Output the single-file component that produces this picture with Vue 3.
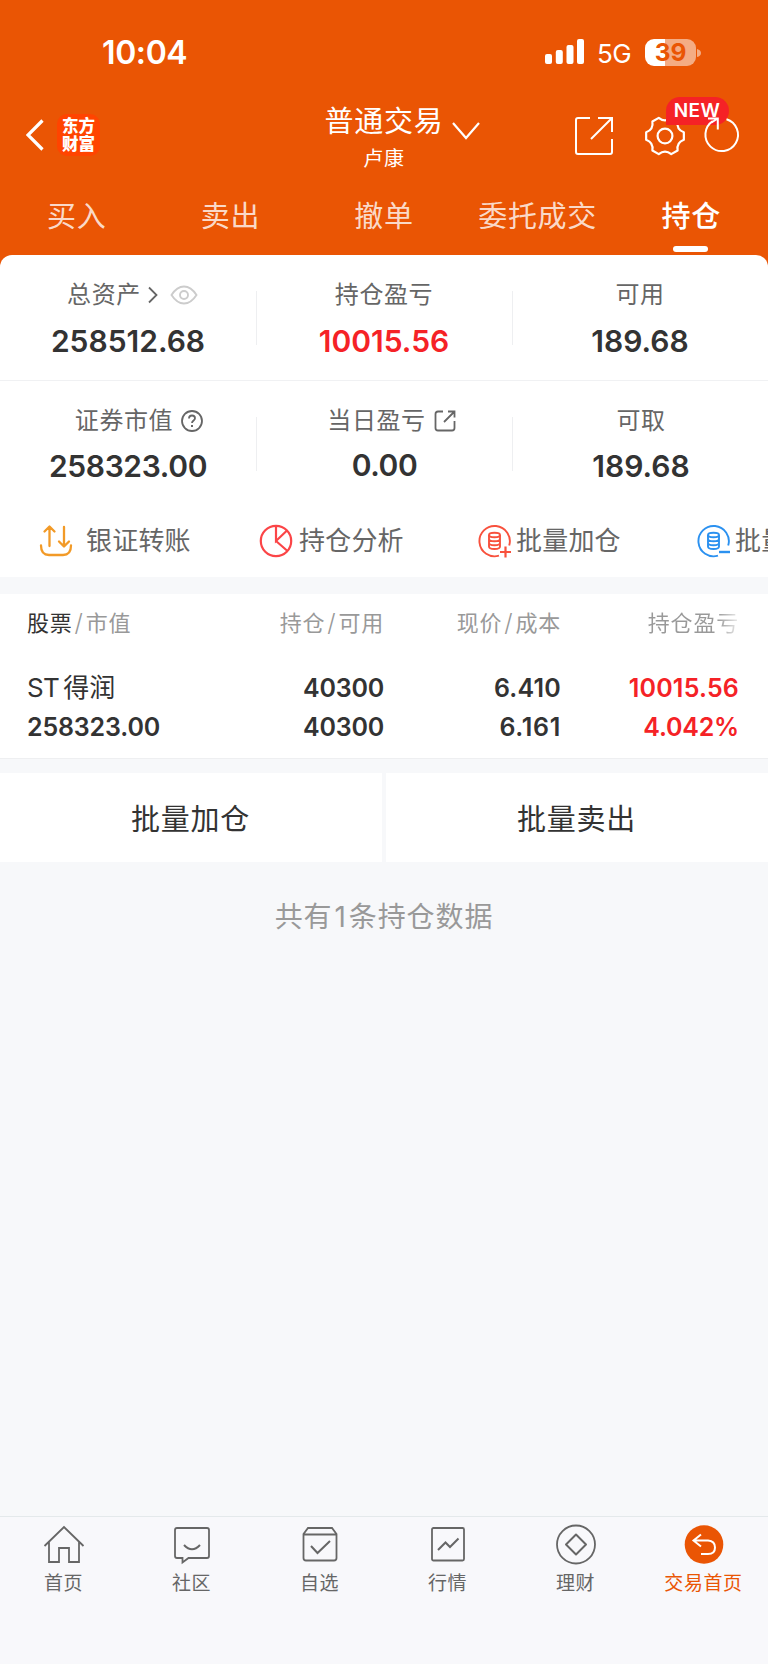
<script setup>
const tabs = ['买入', '卖出', '撤单', '委托成交', '持仓']
const nav = [
  { id: 'home', label: '首页' },
  { id: 'club', label: '社区' },
  { id: 'fav', label: '自选' },
  { id: 'quote', label: '行情' },
  { id: 'wealth', label: '理财' },
  { id: 'trade', label: '交易首页' },
]
</script>

<template>
  <div class="page">
    <div class="top">
      <div class="status">
        <span class="time">10:04</span>
        <div class="status-right">
          <svg class="signal" width="39" height="25" viewBox="0 0 39 25" fill="#fff">
            <rect x="0" y="15" width="7" height="10" rx="2" />
            <rect x="10.8" y="11" width="7" height="14" rx="2" />
            <rect x="21.5" y="6" width="7" height="19" rx="2" />
            <rect x="32" y="0" width="7" height="25" rx="2" />
          </svg>
          <span class="net">5G</span>
          <div class="battery"><span>39</span></div>
          <svg width="4" height="10" viewBox="0 0 4 10"><path d="M0 1Q4 2 4 5T0 9Z" fill="#f4ac84" /></svg>
        </div>
      </div>

      <div class="bar">
        <div class="bar-left">
          <svg width="18" height="32" viewBox="0 0 18 32" fill="none" stroke="#fff" stroke-width="3.2"><path d="M16.5 1.5L2 16L16.5 30.5" /></svg>
          <div class="logo"><span>东方</span><span>财富</span></div>
        </div>
        <div class="title">
          <div class="title-main">普通交易</div>
          <div class="title-sub">卢康</div>
          <svg class="caret" width="28" height="20" viewBox="0 0 28 20" fill="none" stroke="#fff" stroke-width="2.2"><path d="M1 2L14 17L27 2" /></svg>
        </div>
        <div class="bar-right">
          <svg width="40" height="40" viewBox="0 0 40 40" fill="none" stroke="#fff" stroke-width="2"><path d="M16 2H4Q2 2 2 4V36Q2 38 4 38H36Q38 38 38 36V23M24 2H38V16M38 2L17 23" /></svg>
          <div class="gear">
            <svg width="42" height="42" viewBox="0 0 42 42" fill="none" stroke="#fff" stroke-width="2.200" stroke-linejoin="round"><circle cx="21" cy="21" r="7.400" /><path d="M39.850 17.300V24.700Q32.300 27.500 33.600 35.500L27.250 39.150Q21 34 14.750 39.150L8.400 35.500Q9.700 27.500 2.150 24.700V17.300Q9.700 14.500 8.400 6.500L14.750 2.850Q21 8 27.250 2.850L33.600 6.500Q32.300 14.500 39.850 17.300Z" /></svg>
            <span class="badge">NEW</span>
          </div>
          <svg class="refresh" width="40" height="42" viewBox="0 0 40 42" fill="none" stroke="#fff" stroke-width="2"><path d="M24.500 5.200A16.300 16.300 0 1 1 10.700 7.200" /><path d="M6 4.500H15.800V15.500M15.800 4.500L9.500 8.500" /></svg>
        </div>
      </div>

      <div class="tabs">
        <div v-for="(t, i) in tabs" :key="t" class="tab" :class="{ on: i === 4 }">{{ t }}</div>
      </div>

      <div class="card">
        <div class="row">
          <div class="cell">
            <div class="label l1">总资产
              <svg class="chev" width="10" height="18" viewBox="0 0 10 18" fill="none" stroke="#666" stroke-width="1.800"><path d="M1 1.500L8.500 9L1 16.500" /></svg>
              <svg class="eye" width="28" height="20" viewBox="0 0 28 20" fill="none" stroke="#ccc" stroke-width="1.900"><path d="M1.500 10Q7 1.500 14 1.500T26.500 10Q21 18.500 14 18.500T1.500 10Z" /><circle cx="14" cy="10" r="4" /></svg>
            </div>
            <div class="val">258512.68</div>
          </div>
          <div class="cell"><div class="label">持仓盈亏</div><div class="val red">10015.56</div></div>
          <div class="cell"><div class="label">可用</div><div class="val">189.68</div></div>
        </div>
        <div class="row second">
          <div class="cell">
            <div class="label l2">证券市值
              <svg class="ico" width="22" height="22" viewBox="0 0 22 22" fill="none" stroke="#666" stroke-width="1.800"><circle cx="11" cy="11" r="10" /><path d="M8 8.500Q8 5.500 11 5.500T14 8.300C14 10.500 11 10.500 11 13" /><path d="M11 15V17" stroke-width="2" /></svg>
            </div>
            <div class="val tight">258323.00</div>
          </div>
          <div class="cell">
            <div class="label l3">当日盈亏
              <svg class="ico" width="22" height="22" viewBox="0 0 22 22" fill="none" stroke="#666" stroke-width="1.800"><path d="M9 1.500H4Q1.500 1.500 1.500 4V18Q1.500 20.500 4 20.500H18Q20.500 20.500 20.500 18V11M14 1.500H20.500V7.500M20.500 1.500L10 12" /></svg>
            </div>
            <div class="val up">0.00</div>
          </div>
          <div class="cell shift"><div class="label">可取</div><div class="val">189.68</div></div>
        </div>
        <div class="actions">
          <div class="action first">
            <svg width="34" height="34" viewBox="0 0 34 34" fill="none" stroke="#f29a27" stroke-width="2.300" stroke-linecap="round" stroke-linejoin="round"><path d="M2 21.500Q2 31 10 31H24Q32 31 32 21.500M10.500 22V3M5.500 7.500L10.500 2.500L15.500 7.500M25 3V22M20 17.500L25 22.500L30 17.500" /></svg>
            <span>银证转账</span>
          </div>
          <div class="action">
            <svg width="34" height="34" viewBox="0 0 34 34" fill="none" stroke="#fb4547" stroke-width="2.200"><circle cx="17" cy="17" r="15.200" /><path d="M17 1.800V17L28 6.500M17 17L28.500 27" /></svg>
            <span>持仓分析</span>
          </div>
          <div class="action third">
            <svg width="34" height="34" viewBox="0 0 34 34" fill="none" stroke="#f8513d" stroke-width="1.900"><path d="M31.200 21.500A15.200 15.200 0 1 0 21 31.700" /><ellipse cx="16.500" cy="11" rx="5.500" ry="2.300" /><path d="M11 11V22.500Q11 25 16.500 25T22 22.500V11M11 15Q11 17.300 16.500 17.300T22 15M11 19Q11 21.200 16.500 21.200T22 19" /><path d="M27.500 22.500V33.500M22 28H33" stroke-width="2.200" /></svg>
            <span>批量加仓</span>
          </div>
          <div class="action third">
            <svg width="34" height="34" viewBox="0 0 34 34" fill="none" stroke="#2b91f0" stroke-width="1.900"><path d="M31.200 21.500A15.200 15.200 0 1 0 21 31.700" /><ellipse cx="16.500" cy="11" rx="5.500" ry="2.300" /><path d="M11 11V22.500Q11 25 16.500 25T22 22.500V11M11 15Q11 17.300 16.500 17.300T22 15M11 19Q11 21.200 16.500 21.200T22 19" /><path d="M22 28H33" stroke-width="2.400" /></svg>
            <span>批量</span>
          </div>
        </div>
      </div>
    </div>

    <div class="table">
      <div class="thead">
        <div><b>股票</b><i>/</i>市值</div>
        <div>持仓<i>/</i>可用</div>
        <div>现价<i>/</i>成本</div>
        <div class="fade">持仓盈亏</div>
      </div>
      <div class="trow"><div class="name"><span class="st">ST</span>得润</div><div class="qty">40300</div><div class="loose">6.410</div><div class="red loose">10015.56</div></div>
      <div class="trow last"><div class="value">258323.00</div><div class="qty">40300</div><div class="cost">6.161</div><div class="red pct">4.042%</div></div>
    </div>

    <div class="batch">
      <div>批量加仓</div>
      <div>批量卖出</div>
    </div>
    <div class="count">共有<span>1</span>条持仓数据</div>

    <div class="nav">
      <div v-for="n in nav" :key="n.id" class="nav-item" :class="{ active: n.id === 'trade' }">
        <svg width="42" height="42" viewBox="0 0 42 42" fill="none" stroke="#666" stroke-width="1.800">
          <path v-if="n.id === 'home'" d="M1.500 22L21 3L40.500 22M6 18V38H16V24H26V38H36V18" />
          <template v-else-if="n.id === 'club'">
            <path d="M6 4H36Q38 4 38 6V32Q38 34 36 34H17.500L11.500 38.500V34H6Q4 34 4 32V6Q4 4 6 4Z" />
            <path d="M13 21Q21 29.500 29 21" stroke-width="2" />
          </template>
          <template v-else-if="n.id === 'fav'">
            <path d="M4.500 10L9 4H33L37.500 10V34Q37.500 36.500 35 36.500H7Q4.500 36.500 4.500 34ZM4.500 10.500H37.500" />
            <path d="M12 22L18.500 29L31 17" stroke-width="2" />
          </template>
          <template v-else-if="n.id === 'quote'">
            <rect x="5" y="4" width="32" height="32.500" rx="1.500" />
            <path d="M11 26L18.500 18.500L23 23L31.500 14.500" stroke-width="2" />
          </template>
          <template v-else-if="n.id === 'wealth'">
            <circle cx="21" cy="20.500" r="19" />
            <path d="M21 10.500L31 20.500L21 30.500L11 20.500Z" stroke-width="2" stroke-linejoin="round" />
          </template>
          <template v-else>
            <circle cx="21" cy="20.500" r="19.300" fill="#ea5504" stroke="none" />
            <path d="M18 10.500L10.500 16.500L18 22.500M10.500 16.500H25Q32 17 32 23.500T25 30H18" stroke="#fff" stroke-width="2" />
          </template>
        </svg>
        <span>{{ n.label }}</span>
      </div>
    </div>
  </div>
</template>

<style>
body { background: #fff; }
</style>

<style scoped>
.page { width: 768px; height: 1664px; display: flex; flex-direction: column; overflow: hidden; background: #f7f8fa; font-family: Inter, "Noto Sans CJK SC", sans-serif; color: #333; }
.page svg { display: block; flex: none; }
.top { background: #ea5504; }
.status { height: 100px; box-sizing: border-box; padding: 5px 67px 0 102px; display: flex; justify-content: space-between; align-items: center; color: #fff; }
.time { font-size: 32px; font-weight: 600; letter-spacing: -0.4px; }
.status-right { display: flex; align-items: center; }
.signal { margin-top: -2px; position: relative; left: 1px; }
.net { font-size: 26px; margin-left: 14px; width: 34px; letter-spacing: -0.5px; line-height: 30px; padding-top: 2px; }
.battery { margin: -1px 1px 0 14px; width: 51px; height: 27px; border-radius: 9px; background: linear-gradient(90deg, #fff 20px, #f4ac84 20px); display: flex; align-items: center; justify-content: center; color: #ea5504; font-weight: 700; font-size: 24.5px; line-height: 27px; }
.bar { height: 76px; display: grid; grid-template-columns: 250px 268px 250px; }
.bar-left { display: flex; align-items: center; padding-left: 26px; gap: 13px; height: 70px; }
.logo { width: 43px; height: 42px; border-radius: 10px; background: #ff4400; color: #fff; font-weight: 900; font-size: 16.500px; line-height: 18px; display: flex; flex-direction: column; align-items: center; justify-content: center; }
.title { position: relative; text-align: center; color: #fff; padding-top: 1px; }
.title-main { font-size: 29px; line-height: 42px; letter-spacing: 0.7px; }
.title-sub { font-size: 20px; line-height: 32px; letter-spacing: 0.7px; }
.caret { position: absolute; left: 202px; top: 21px; }
.bar-right { display: flex; align-items: center; height: 71px; padding-left: 56px; }
.gear { position: relative; margin-left: 30px; }
.badge { position: absolute; left: 22px; top: -18px; width: 63px; height: 28px; border-radius: 14px 14px 14px 0; background: #f52226; color: #fff; font-size: 19px; font-weight: 600; line-height: 28px; text-align: center; letter-spacing: 0.4px; text-indent: -1px; }
.refresh { position: relative; margin-left: 16px; top: -1px; }
.tabs { height: 79px; display: grid; grid-template-columns: repeat(5, 1fr); }
.tab { position: relative; text-align: center; font-size: 29px; line-height: 81px; height: 79px; letter-spacing: 0.7px; color: rgba(255, 255, 255, .8); }
.tab.on { color: #fff; font-weight: 500; }
.tab.on::after { content: ""; position: absolute; left: 59px; bottom: 3.500px; width: 35px; height: 5.500px; border-radius: 3px; background: #fff; }
.card { background: #fff; border-radius: 12px 12px 0 0; height: 322px; overflow: hidden; }
.row { height: 125px; display: grid; grid-template-columns: repeat(3, 1fr); border-bottom: 1px solid #f0f1f3; }
.second { border: 0; height: 124px; }
.cell { position: relative; text-align: center; padding-top: 22px; }
.cell + .cell::before { content: ""; position: absolute; left: 0; top: 36px; width: 1px; height: 54px; background: #eeeff1; }
.label { font-size: 24px; line-height: 36px; height: 36px; letter-spacing: 0.6px; color: #666; display: flex; align-items: center; justify-content: center; }
.chev { margin-left: 7px; }
.eye { margin-left: 12px; }
.l1 { padding-left: 9px; }
.l2 { padding-left: 22px; }
.l3 { padding-left: 15px; }
.ico { margin-left: 8px; margin-top: -1px; }
.val { font-size: 30px; line-height: 40px; margin-top: 8px; font-weight: 600; }
.second .val { margin-top: 7px; }
.tight { letter-spacing: -0.35px; }
.second .up { margin-top: 6px; padding-left: 1px; letter-spacing: -0.4px; }
.shift { left: 1px; }
.shift::before { left: -1px !important; }
.red { color: #f52226; }
.actions { display: flex; height: 71px; align-items: center; padding-left: 39px; box-sizing: border-box; }
.action { display: flex; align-items: center; flex: none; width: 219px; color: #666; font-size: 26px; letter-spacing: 0.2px; line-height: 36px; }
.action:not(.first) svg { position: relative; left: 1px; }
.action svg { margin-top: 1px; }
.action span { margin-left: 7px; white-space: nowrap; position: relative; top: 0.500px; }
.action.third span { margin-left: 5px; }
.action.first span { margin-left: 13px; }
.table { margin-top: 17px; height: 165px; background: #fff; border-bottom: 1px solid #eeeff1; box-sizing: border-box; }
.thead, .trow { display: grid; grid-template-columns: 191px 166px 177px 178px; padding-left: 27px; text-align: right; }
.thead > :first-child, .trow > :first-child { text-align: left; }
.thead { line-height: 59px; height: 75px; font-size: 22px; letter-spacing: 0.8px; color: #999; }
.thead > div { height: 59px; }
.thead b { font-weight: 400; color: #333; }
.thead i { font-style: normal; font-size: 24px; line-height: 20px; margin: 0 2px; font-weight: 300; }
.fade { background: linear-gradient(90deg, #999 88%, #eee 100%); -webkit-background-clip: text; background-clip: text; color: transparent; }
.trow { height: 39px; line-height: 39px; font-size: 25px; font-weight: 600; }
.trow.last { line-height: 38px; }
.name { font-weight: 400; font-size: 26px; line-height: 37px; }
.st { margin-right: 4px; letter-spacing: -0.6px; }
.qty { letter-spacing: -0.2px; }
.value { letter-spacing: -0.15px; }
.loose { letter-spacing: 0.2px; }
.cost { letter-spacing: 0.7px; }
.pct { letter-spacing: -0.2px; }
.batch { margin-top: 14px; display: grid; grid-template-columns: 382px 382px; gap: 4px; height: 89px; }
.batch div { background: #fff; text-align: center; font-size: 29px; line-height: 93px; height: 89px; letter-spacing: 0.7px; text-indent: -1px; }
.count { margin-top: 35px; text-align: center; color: #999; font-size: 28px; line-height: 40px; letter-spacing: 0.9px; }
.count span { margin: 0 2px; }
.nav { margin-top: auto; height: 148px; border-top: 1px solid #e4e9eb; display: grid; grid-template-columns: repeat(6, 1fr); box-sizing: border-box; background: #f8f8fb; }
.nav-item { display: flex; flex-direction: column; align-items: center; padding-top: 7px; color: #666; font-size: 19px; }
.nav-item span { line-height: 30px; letter-spacing: 0.6px; margin-top: 3px; margin-right: 1px; white-space: nowrap; }
.active { color: #ea5504; }
</style>
